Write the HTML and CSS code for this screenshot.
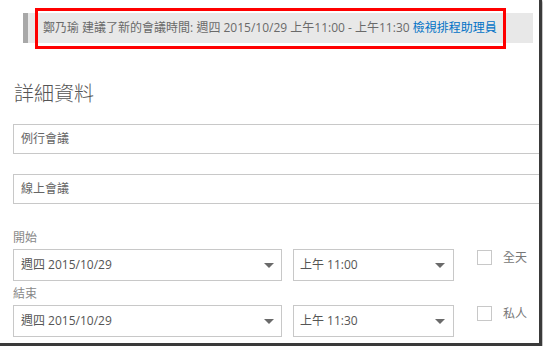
FILE: index.html
```html
<!DOCTYPE html>
<html lang="zh-Hant">
<head>
  <meta charset="UTF-8">
  <title>詳細資料</title>
  <link rel="stylesheet" href="styles.css">
</head>
<body>
  <div class="frame">
    <div class="notice">
      鄭乃瑜 建議了新的會議時間: 週四 2015/10/29 上午11:00 - 上午11:30 <a href="#">檢視排程助理員</a>
    </div>
    <div class="highlight"></div>

    <h1>詳細資料</h1>

    <div class="field">例行會議</div>
    <div class="field">線上會議</div>

    <div class="label">開始</div>
    <div class="row">
      <div class="select date">週四 2015/10/29<span class="arrow"></span></div>
      <div class="select time">上午 11:00<span class="arrow"></span></div>
      <label class="check"><span class="box"></span>全天</label>
    </div>

    <div class="label">結束</div>
    <div class="row">
      <div class="select date">週四 2015/10/29<span class="arrow"></span></div>
      <div class="select time">上午 11:30<span class="arrow"></span></div>
      <label class="check"><span class="box"></span>私人</label>
    </div>
  </div>
</body>
</html>
```

FILE: styles.css
```css
body {
  margin: 0;
  background: #fff;
  font-family: "Open Sans", "Noto Sans CJK TC", sans-serif;
  font-size: 12px;
  color: #333;
  overflow: hidden;
}
.frame {
  position: relative;
  width: 542px;
  height: 346px;
  box-sizing: border-box;
  padding-left: 13px;
  overflow: hidden;
  border-right: 3px solid #3a3a3a;
  border-bottom: 3px solid #3a3a3a;
  box-shadow: 1px 1px 2px #aaa;
}
.notice {
  margin: 13px 0 0 10px;
  width: 510px;
  height: 30px;
  line-height: 30px;
  box-sizing: border-box;
  border-left: 5px solid #a8a8a8;
  background: #e8e8e8;
  padding-left: 15px;
  color: #6a6a6a;
  white-space: nowrap;
}
.notice a {
  color: #0072c6;
  text-decoration: none;
}
.highlight {
  position: absolute;
  left: 35px;
  top: 8px;
  width: 471px;
  height: 41px;
  box-sizing: border-box;
  border: 3px solid #ff0000;
}
h1 {
  margin: 37px 0 0 1px;
  font-size: 20px;
  line-height: 28px;
  font-weight: 300;
  color: #555;
}
.field {
  margin-top: 16px;
  width: 560px;
  height: 30px;
  line-height: 28px;
  box-sizing: border-box;
  border: 1px solid #c8c8c8;
  padding-left: 7px;
  color: #666;
}
.field + .field {
  margin-top: 20px;
}
.label {
  margin-top: 24px;
  line-height: 20px;
  color: #888;
}
.row + .label {
  margin-top: 3px;
}
.row {
  margin-top: 1px;
  display: flex;
  align-items: flex-start;
}
.select {
  position: relative;
  height: 32px;
  line-height: 30px;
  box-sizing: border-box;
  border: 1px solid #c8c8c8;
  padding-left: 7px;
  color: #555;
}
.select.date {
  width: 269px;
  margin-right: 11px;
}
.select.time {
  width: 161px;
  padding-left: 6px;
}
.arrow {
  position: absolute;
  right: 7px;
  top: 13px;
  width: 0;
  height: 0;
  border-left: 5px solid transparent;
  border-right: 5px solid transparent;
  border-top: 5px solid #6a6a6a;
}
.time .arrow {
  right: 8px;
}
.check {
  display: flex;
  align-items: center;
  margin-left: 23px;
  margin-top: 1px;
  color: #777;
  line-height: 15px;
}
.box {
  width: 15px;
  height: 15px;
  box-sizing: border-box;
  border: 1px solid #c8c8c8;
  margin-right: 11px;
}
```
